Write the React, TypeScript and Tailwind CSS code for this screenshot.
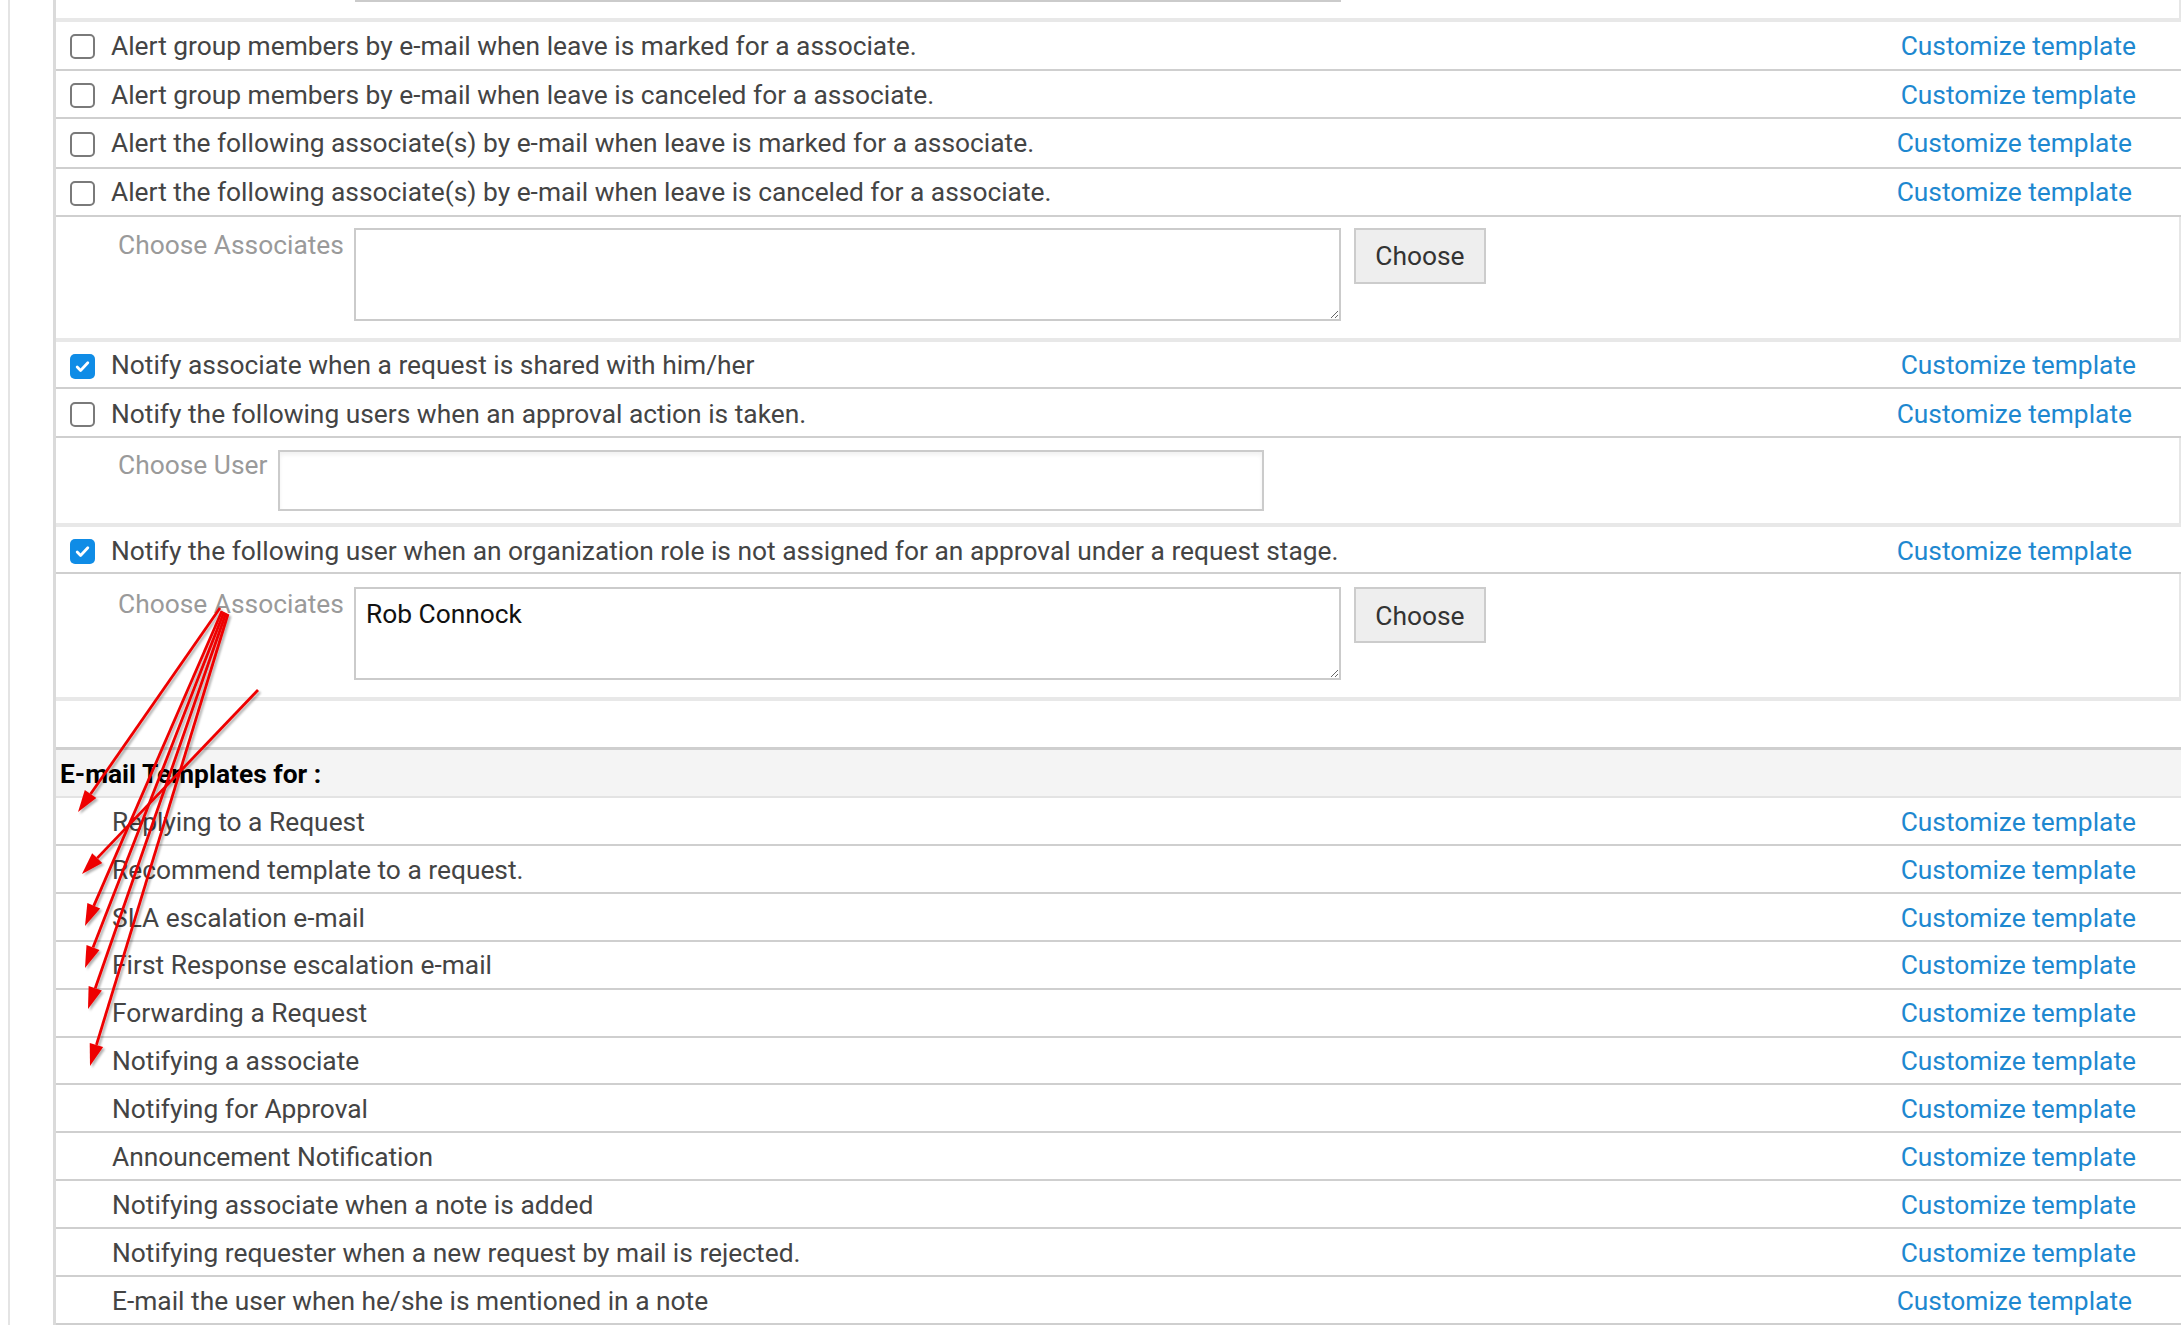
import React from 'react';

type CheckRow = {
  label: string;
  checked: boolean;
  h: string;
  pr: string;
};

type Arrow = { x1: number; y1: number; x2: number; y2: number };

const templates = [
  'Replying to a Request',
  'Recommend template to a request.',
  'SLA escalation e-mail',
  'First Response escalation e-mail',
  'Forwarding a Request',
  'Notifying a associate',
  'Notifying for Approval',
  'Announcement Notification',
  'Notifying associate when a note is added',
  'Notifying requester when a new request by mail is rejected.',
  'E-mail the user when he/she is mentioned in a note',
];

const arrows: Arrow[] = [
  { x1: 220, y1: 608, x2: 78, y2: 812 },
  { x1: 258, y1: 690, x2: 82, y2: 874 },
  { x1: 222, y1: 611, x2: 85, y2: 926 },
  { x1: 224, y1: 612, x2: 85, y2: 968 },
  { x1: 226, y1: 613, x2: 88, y2: 1009 },
  { x1: 228, y1: 614, x2: 90, y2: 1066 },
];

function Checkbox({ checked }: { checked: boolean }) {
  if (checked) {
    return (
      <div className="w-[25px] h-[25px] rounded-[5px] bg-[#0f8ce6] flex items-center justify-center shrink-0">
        <svg width="17" height="17" viewBox="0 0 16 16" fill="none">
          <path d="M3 8.5l3.2 3.2L13 4.5" stroke="white" strokeWidth="2.6" strokeLinecap="round" strokeLinejoin="round" />
        </svg>
      </div>
    );
  }
  return <div className="w-[25px] h-[25px] rounded-[5px] border-2 border-[#7a7a7a] bg-white shrink-0" />;
}

function Link({ pr }: { pr: string }) {
  return <span className={`ml-auto text-[#1e88d0] whitespace-nowrap ${pr}`}>Customize template</span>;
}

function OptionRow({ row }: { row: CheckRow }) {
  return (
    <div className={`flex items-center pt-[3px] border-b-2 border-[#cfcfcf] ${row.h}`}>
      <div className="pl-[14px] pr-[16px] flex items-center">
        <Checkbox checked={row.checked} />
      </div>
      <span className="text-[#444] whitespace-nowrap">{row.label}</span>
      <Link pr={row.pr} />
    </div>
  );
}

function Band() {
  return <div className="h-[4px] bg-[#e8e8e8]" />;
}

function ChoosePanel({ value, pad }: { value?: string; pad: string }) {
  return (
    <div className={`flex items-start pl-[62px] border-r-2 border-[#e6e6e6] ${pad}`}>
      <span className="text-[#9a9a9a] leading-[30px] mt-[2px] whitespace-nowrap">Choose Associates</span>
      <textarea
        readOnly
        value={value ?? ''}
        className="ml-[10px] w-[987px] h-[93px] resize border-2 border-[#cbcbcb] bg-white px-[10px] pt-[10px] leading-[30px] text-[#111] outline-none"
      />
      <button className="ml-[13px] w-[132px] h-[56px] pt-[3px] bg-[#eeeeee] border-2 border-[#cccccc] text-[#333]">
        Choose
      </button>
    </div>
  );
}

function Arrows() {
  return (
    <svg className="absolute top-0 left-0 pointer-events-none" width="2181" height="1325">
      <defs>
        <filter id="sh" x="-20%" y="-20%" width="140%" height="140%">
          <feDropShadow dx="2" dy="2" stdDeviation="1.2" floodColor="#000" floodOpacity="0.3" />
        </filter>
      </defs>
      <g filter="url(#sh)">
        {arrows.map((a, i) => {
          const dx = a.x2 - a.x1;
          const dy = a.y2 - a.y1;
          const len = Math.hypot(dx, dy);
          const ux = dx / len;
          const uy = dy / len;
          const bx = a.x2 - ux * 22;
          const by = a.y2 - uy * 22;
          const px = -uy * 7;
          const py = ux * 7;
          return (
            <g key={i}>
              <line x1={a.x1} y1={a.y1} x2={bx} y2={by} stroke="#ee0000" strokeWidth="2.8" />
              <polygon
                points={`${a.x2},${a.y2} ${bx + px},${by + py} ${bx - px},${by - py}`}
                fill="#ee0000"
              />
            </g>
          );
        })}
      </g>
    </svg>
  );
}

export default function App() {
  const topRows: CheckRow[] = [
    { label: 'Alert group members by e-mail when leave is marked for a associate.', checked: false, h: 'h-[49px]', pr: 'pr-[45px]' },
    { label: 'Alert group members by e-mail when leave is canceled for a associate.', checked: false, h: 'h-[48px]', pr: 'pr-[45px]' },
    { label: 'Alert the following associate(s) by e-mail when leave is marked for a associate.', checked: false, h: 'h-[50px]', pr: 'pr-[49px]' },
    { label: 'Alert the following associate(s) by e-mail when leave is canceled for a associate.', checked: false, h: 'h-[48px]', pr: 'pr-[49px]' },
  ];

  return (
    <div className="relative w-[2181px] h-[1325px] overflow-hidden bg-white font-[Roboto,sans-serif] text-[26.35px] flex">
      <div className="w-[8px]" />
      <div className="w-[2px] bg-[#e4e4e4]" />
      <div className="w-[43px]" />
      <div className="flex-1 border-l-[3px] border-[#dadada] flex flex-col">
        {/* tail of the previous panel */}
        <div className="h-[18px] border-r-2 border-[#e6e6e6]">
          <div className="ml-[299px] w-[986px] h-[2px] bg-[#cbcbcb]" />
        </div>
        <Band />

        {topRows.map((r) => (
          <OptionRow key={r.label} row={r} />
        ))}
        <ChoosePanel pad="pt-[11px] pb-[17px]" />
        <Band />

        <OptionRow row={{ label: 'Notify associate when a request is shared with him/her', checked: true, h: 'h-[48px]', pr: 'pr-[45px]' }} />
        <OptionRow row={{ label: 'Notify the following users when an approval action is taken.', checked: false, h: 'h-[49px]', pr: 'pr-[49px]' }} />
        <div className="flex items-start pl-[62px] pt-[12px] pb-[12px] border-r-2 border-[#e6e6e6]">
          <span className="text-[#9a9a9a] leading-[30px] whitespace-nowrap">Choose User</span>
          <div className="ml-[11px] w-[986px] h-[61px] border-2 border-[#cbcbcb] bg-white shadow-[inset_0_3px_4px_rgba(0,0,0,0.06)]" />
        </div>
        <Band />

        <OptionRow row={{ label: 'Notify the following user when an organization role is not assigned for an approval under a request stage.', checked: true, h: 'h-[47px]', pr: 'pr-[49px]' }} />
        <ChoosePanel value="Rob Connock" pad="pt-[13px] pb-[17px]" />
        <Band />

        <div className="h-[46px]" />
        <div className="h-[3px] bg-[#cfcfcf]" />
        <div className="h-[48px] bg-[#f4f4f4] border-b-2 border-[#e3e3e3] flex items-center pt-[3px] pl-[4px]">
          <span className="font-bold text-black">E-mail Templates for :</span>
        </div>

        {templates.map((t, i) => (
          <div key={t} className="h-[48px] flex items-center pt-[3px] border-b-2 border-[#cfcfcf] pl-[56px]">
            <span className="text-[#444] whitespace-nowrap">{t}</span>
            <Link pr={i === templates.length - 1 ? 'pr-[49px]' : 'pr-[45px]'} />
          </div>
        ))}
      </div>
      <Arrows />
    </div>
  );
}
